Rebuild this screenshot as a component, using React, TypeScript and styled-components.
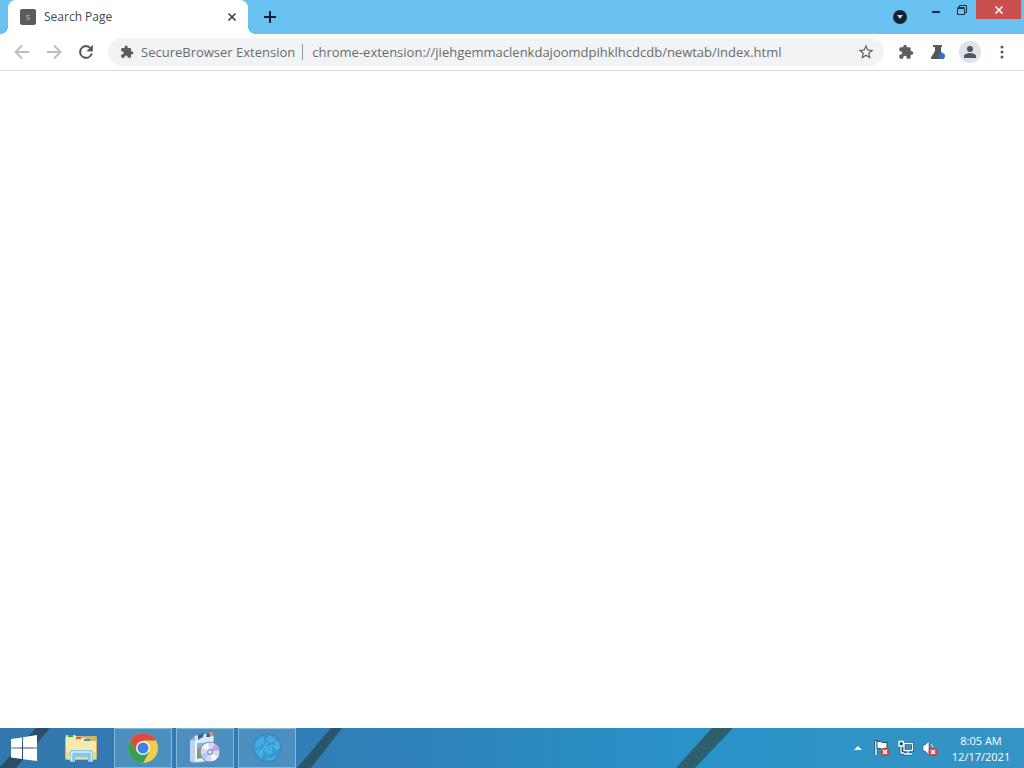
import React from 'react';
import styled, { createGlobalStyle } from 'styled-components';

const GlobalStyle = createGlobalStyle`
  * { box-sizing: border-box; }
  body {
    margin: 0;
    background: #fff;
    font-family: "Open Sans", "Noto Sans", sans-serif;
  }
  button, input { font: inherit; color: inherit; }
`;

const Desktop = styled.div`
  display: flex;
  flex-direction: column;
  min-height: 100vh;
`;

const PlainButton = styled.button`
  display: flex;
  align-items: center;
  justify-content: center;
  padding: 0;
  border: 0;
  background: transparent;
`;

const TabStrip = styled.header`
  display: flex;
  height: 34px;
  padding: 0 3px 0 8px;
  background: #69c1f0;
`;

const Tab = styled.div`
  position: relative;
  display: flex;
  align-items: center;
  gap: 8px;
  width: 240px;
  padding: 0 8px 0 12px;
  border-radius: 8px 8px 0 0;
  background: #fff;
  color: #45494d;
  font-size: 12px;
  line-height: 16px;

  &::before, &::after {
    content: "";
    position: absolute;
    bottom: 0;
    width: 8px;
    height: 8px;
  }
  &::before {
    right: 100%;
    background: radial-gradient(circle at 0 0, transparent 8px, #fff 8px);
  }
  &::after {
    left: 100%;
    background: radial-gradient(circle at 100% 0, transparent 8px, #fff 8px);
  }
`;

const Favicon = styled.span`
  width: 16px;
  height: 16px;
  border-radius: 2px;
  background: #5b5b5b;
  color: #ccc;
  font-size: 8px;
  line-height: 16px;
  text-align: center;
`;

const TabTitle = styled.span`
  flex: 1;
`;

const TabClose = styled(PlainButton)`
  width: 16px;
  height: 16px;
`;

const NewTab = styled(PlainButton)`
  width: 28px;
  margin-left: 8px;
`;

const WindowControls = styled.div`
  display: flex;
  align-items: flex-start;
  margin-left: auto;
`;

const TabSearch = styled(PlainButton)`
  width: 28px;
  height: 34px;
  margin-right: 10px;
`;

const WindowButton = styled(PlainButton)<{ $close?: boolean }>`
  width: ${p => (p.$close ? 45 : 26)}px;
  height: 19px;
  background: ${p => (p.$close ? '#c9504f' : 'transparent')};
`;

const Toolbar = styled.nav`
  display: flex;
  align-items: center;
  gap: 4px;
  height: 37px;
  padding: 0 8px;
  border-bottom: 1px solid #d9dbde;
  background: #fff;
`;

const ToolButton = styled(PlainButton)`
  width: 28px;
  height: 28px;
`;

const Omnibox = styled.div`
  display: flex;
  flex: 1;
  align-items: center;
  height: 28px;
  margin: 0 4px;
  padding: 0 4px 0 12px;
  border-radius: 14px;
  background: #f1f3f4;
  color: #686c70;
  font-size: 13px;
  line-height: 18px;
`;

const SiteChip = styled.label`
  display: flex;
  align-items: center;
  gap: 7px;
  white-space: nowrap;
`;

const Divider = styled.span`
  width: 1px;
  height: 16px;
  background: #96999c;
`;

const Address = styled.input`
  flex: 1;
  min-width: 0;
  padding: 0 0 0 9px;
  border: 0;
  outline: 0;
  background: transparent;
`;

const Avatar = styled.span`
  display: flex;
  align-items: center;
  justify-content: center;
  width: 22px;
  height: 22px;
  border-radius: 50%;
  background: #dfe2e7;
`;

const Page = styled.main`
  flex: 1;
  background: #fff;
`;

const Taskbar = styled.footer`
  position: relative;
  display: flex;
  height: 40px;
  background: linear-gradient(90deg, #3277ae 0%, #2f80b7 35%, #2993c8 68%, #3594c3 100%);
`;

const Streaks = styled.svg`
  position: absolute;
  inset: 0;
  width: 100%;
  height: 100%;
`;

const Apps = styled.div`
  position: relative;
  display: flex;
  gap: 4px;
`;

const Start = styled(PlainButton)`
  width: 48px;
`;

const AppButton = styled(PlainButton)<{ $open?: boolean }>`
  width: 58px;
  border: 1px solid ${p => (p.$open ? '#86b7d7' : 'transparent')};
  background: ${p => (p.$open ? '#4c8fbf' : 'transparent')};
`;

const Tray = styled.div`
  position: relative;
  display: flex;
  align-items: center;
  margin-left: auto;
  padding-right: 8px;
`;

const TrayButton = styled(PlainButton)`
  width: 24px;
  height: 40px;
`;

const Clock = styled.time`
  width: 70px;
  margin-left: 4px;
  padding-top: 2px;
  color: #fff;
  font-size: 11px;
  line-height: 16px;
  text-align: center;
`;

const puzzlePath =
  'M20.500 11H19V7c0-1.100-.9-2-2-2h-4V3.500a2.500 2.500 0 0 0-5 0V5H4c-1.100 0-2 .9-2 2v3.800h1.500a2.700 2.700 0 0 1 0 5.400H2V20c0 1.100.9 2 2 2h3.800v-1.500a2.700 2.700 0 0 1 5.400 0V22H17c1.100 0 2-.9 2-2v-4h1.500a2.500 2.500 0 0 0 0-5z';

const Puzzle = ({ size }: { size: number }) => (
  <svg width={size} height={size} viewBox="0 0 24 24" fill="#5b5f64" aria-hidden="true">
    <path d={puzzlePath} />
  </svg>
);

const ErrorBadge = ({ x, y }: { x: number; y: number }) => (
  <g>
    <circle cx={x} cy={y} r="4" fill="#d84b42" stroke="#c23a35" />
    <path d={`M${x - 2} ${y - 2}l4 4m0-4l-4 4`} stroke="#fff" strokeWidth="1.500" />
  </g>
);

function BrowserTabs() {
  return (
    <TabStrip>
      <Tab>
        <Favicon>S</Favicon>
        <TabTitle>Search Page</TabTitle>
        <TabClose aria-label="Close tab">
          <svg width="16" height="16" stroke="#3c4043" strokeWidth="1.700">
            <path d="M4.500 4.500l7 7m0-7l-7 7" />
          </svg>
        </TabClose>
      </Tab>
      <NewTab aria-label="New tab">
        <svg width="14" height="14" stroke="#10222e" strokeWidth="2">
          <path d="M1 7h12M7 1v12" />
        </svg>
      </NewTab>
      <WindowControls>
        <TabSearch aria-label="Search tabs">
          <svg width="14" height="14">
            <circle cx="7" cy="7" r="7" fill="#14222d" />
            <path d="M4 5h6L7 9z" fill="#b9d9ea" />
          </svg>
        </TabSearch>
        <WindowButton aria-label="Minimize">
          <svg width="12" height="14">
            <path d="M1 8h8v2H1z" fill="#123047" />
          </svg>
        </WindowButton>
        <WindowButton aria-label="Restore">
          <svg width="12" height="12" fill="none" stroke="#123047">
            <path d="M.5 4.500h7v6h-7zM.5 3.500h7M2.500 3V1.500h7v7H8" />
          </svg>
        </WindowButton>
        <WindowButton $close aria-label="Close">
          <svg width="10" height="10" stroke="#fff" strokeWidth="1.600">
            <path d="M1.500 1.500l7 7m0-7l-7 7" />
          </svg>
        </WindowButton>
      </WindowControls>
    </TabStrip>
  );
}

function BrowserToolbar() {
  return (
    <Toolbar>
      <ToolButton aria-label="Back">
        <svg width="16" height="16" fill="none" stroke="#b9bbbe" strokeWidth="1.800">
          <path d="M15 8H2M8 1.500L1.500 8 8 14.500" />
        </svg>
      </ToolButton>
      <ToolButton aria-label="Forward">
        <svg width="16" height="16" fill="none" stroke="#b9bbbe" strokeWidth="1.800">
          <path d="M1 8h13M8 1.500L14.500 8 8 14.500" />
        </svg>
      </ToolButton>
      <ToolButton aria-label="Reload">
        <svg width="20" height="20" viewBox="0 0 24 24" fill="#505459" stroke="#505459" strokeWidth=".5">
          <path d="M17.650 6.350A8 8 0 1 0 19.730 14h-2.080A6 6 0 1 1 12 6c1.660 0 3.140.69 4.220 1.780L13 11h7V4z" />
        </svg>
      </ToolButton>
      <Omnibox>
        <SiteChip htmlFor="address">
          <Puzzle size={14} />
          SecureBrowser Extension
          <Divider />
        </SiteChip>
        <Address
          id="address"
          spellCheck={false}
          defaultValue="chrome-extension://jiehgemmaclenkdajoomdpihklhcdcdb/newtab/index.html"
        />
        <ToolButton aria-label="Bookmark this page">
          <svg width="18" height="18" viewBox="0 0 24 24" fill="#5b5f64">
            <path d="M22 9.240l-7.190-.62L12 2 9.190 8.630 2 9.240l5.460 4.730L5.820 21 12 17.270 18.180 21l-1.630-7.030zM12 15.400l-3.760 2.270 1-4.280-3.320-2.880 4.380-.38L12 6.100l1.710 4.040 4.380.38-3.320 2.880 1 4.280z" />
          </svg>
        </ToolButton>
      </Omnibox>
      <ToolButton aria-label="Extensions">
        <Puzzle size={16} />
      </ToolButton>
      <ToolButton aria-label="Experiments">
        <svg width="16" height="16">
          <path d="M3 1h9v2h-1v4l3 6.500q.5 1.500-1 1.500H2q-1.500 0-1-1.500L5 7V3H3z" fill="#55595e" />
          <circle cx="12" cy="12" r="3" fill="#2f72de" />
        </svg>
      </ToolButton>
      <ToolButton aria-label="Profile">
        <Avatar>
          <svg width="14" height="14" fill="#50565f">
            <circle cx="7" cy="4" r="3" />
            <path d="M1 13v-2c0-2 4-3 6-3s6 1 6 3v2z" />
          </svg>
        </Avatar>
      </ToolButton>
      <ToolButton aria-label="Menu">
        <svg width="4" height="14" fill="#55595e">
          <circle cx="2" cy="2" r="1.500" />
          <circle cx="2" cy="7" r="1.500" />
          <circle cx="2" cy="12" r="1.500" />
        </svg>
      </ToolButton>
    </Toolbar>
  );
}

function SystemTaskbar() {
  return (
    <Taskbar>
      <Streaks viewBox="0 0 1024 40" preserveAspectRatio="none" aria-hidden="true">
        <path d="M0 39L36 0h14L16 40H0z" fill="#2a4e66" />
        <path d="M297 40L331 0h11L311 40z" fill="#2b5568" />
        <path d="M676 40L712 0h21L695 40z" fill="#2f5e6d" />
      </Streaks>
      <Apps>
        <Start aria-label="Start">
          <svg width="28" height="28" fill="#fff">
            <path d="M1 5L12 3.500v10H1zM13 3.300L27 1v12.500H13zM1 14.500h11V25L1 23.500zM13 14.500h14V27l-14-1.800z" />
          </svg>
        </Start>
        <AppButton aria-label="File Explorer">
          <svg width="34" height="32">
            <path d="M1 6q0-2 2-2h28q2 0 2 2v20q0 2-2 2H3q-2 0-2-2z" fill="#d3b565" />
            <path d="M2 4q0-1 1-1h8l3 3h8l2 3h8v5H2z" fill="#f6e7ae" />
            <path d="M4 3h5v2H4z" fill="#2da545" />
            <path d="M12 5h5v2h-5z" fill="#d6623c" />
            <path d="M20 7h6v2h-6z" fill="#3f93d2" />
            <path d="M2 11h14l2-2h14v17q0 1-1 1H3q-1 0-1-1z" fill="#f8e9a9" />
            <path d="M2 20h30v6q0 1-1 1H3q-1 0-1-1z" fill="#f1d984" />
            <path d="M6 30V21q0-3 3-3h17q3 0 3 3v9h-5v-5H11v5z" fill="#83c6e8" />
            <path d="M7.500 29v-7q0-2 2-2h16q2 0 2 2v7" fill="none" stroke="#d6f1fb" strokeWidth="1.500" />
          </svg>
        </AppButton>
        <AppButton $open aria-label="Google Chrome">
          <svg width="32" height="32" viewBox="0 0 32 32">
            <circle cx="16" cy="16" r="15" fill="#f5ce48" />
            <path d="M16 16L3 8.500A15 15 0 0 1 29 8.500H16z" fill="#dd4b3e" />
            <path d="M3 8.500L9.500 19.750 16 16V8.500z" fill="#dd4b3e" />
            <path d="M3 8.500A15 15 0 0 0 16 31l6.500-11.250H9.500z" fill="#33a058" />
            <circle cx="16" cy="16" r="7" fill="#f3f6fa" />
            <circle cx="16" cy="16" r="5.500" fill="#3f80e4" />
          </svg>
        </AppButton>
        <AppButton $open aria-label="Program installer">
          <svg width="34" height="34">
            <path d="M2 9l6-5 16-2 2 3v24l-3 2-19 1-2-2z" fill="#8db4dd" />
            <path d="M2 10l5-1v22l-5-1z" fill="#bcd5ef" />
            <path d="M7 9l18-1v21L7 31z" fill="#f2f6fc" />
            <path d="M7 5l16-3 3 5-4 3-15 1z" fill="#dce8f6" />
            <path d="M10 4l6-2-1 4-5 3zM19 2l5 1-2 3h-4z" fill="#3f5e9c" />
            <path d="M22 1h3v4h-3z" fill="#e38b74" />
            <path d="M9 12l12-1v9l-12 1z" fill="#7eb9ee" />
            <path d="M9 20q4-5 10-3v9l-10 2z" fill="#4eb55a" />
            <path d="M9 17q3 0 5 4l-5 2z" fill="#e8734a" />
            <circle cx="22" cy="21" r="10" fill="#d5d8f0" stroke="#7a84b4" />
            <path d="M22 21l-8-5a9 9 0 0 1 6-4zM22 21l8 5a9 9 0 0 1-6 4z" fill="#f7f8ff" />
            <path d="M22 21l5-8a9 9 0 0 1 4 6z" fill="#b8a8e5" />
            <path d="M22 21l-5 8a9 9 0 0 1-4-6z" fill="#b5c9f2" />
            <circle cx="22" cy="21" r="3" fill="#8f9bc8" />
            <circle cx="22" cy="21" r="1.500" fill="#fff" />
          </svg>
        </AppButton>
        <AppButton $open aria-label="Web application">
          <svg width="32" height="32">
            <circle cx="16" cy="16" r="14" fill="#3499d0" stroke="#3a86b8" />
            <path
              d="M5 9l7-5 2 5-4 5-6 2zM17 3l7 3-3 5-5-2zM23 11l5-2 1 7-4 3zM4 18l6-1 3 5-3 5zM15 14l6 1 1 6-5 2-4-4zM15 25l5 1 5-4-2 5-6 2z"
              fill="#43ace0"
            />
            <path d="M22 8l5 3M19 13l8 3M9 22l8-12" stroke="#67bce6" fill="none" />
          </svg>
        </AppButton>
      </Apps>
      <Tray>
        <TrayButton aria-label="Show hidden icons">
          <svg width="8" height="4">
            <path d="M0 4l4-4 4 4z" fill="#fff" />
          </svg>
        </TrayButton>
        <TrayButton aria-label="Action center">
          <svg width="16" height="16">
            <path d="M2 0v15" stroke="#24506e" strokeWidth="3" />
            <path d="M2 1v14" stroke="#fff" strokeWidth="1.500" />
            <path d="M3 1.500h4l1 1h5v7H8l-1-1H3z" fill="#fff" stroke="#24506e" />
            <ErrorBadge x={11} y={12} />
          </svg>
        </TrayButton>
        <TrayButton aria-label="Network">
          <svg width="16" height="16" fill="none">
            <path d="M6 3.500h8.500v7H6zM10 11v3M6 14h8M3 6v7h3" stroke="#24506e" strokeWidth="3" />
            <path d="M6 3.500h8.500v7H6zM10 11v3M6 14h8M3 6v7h3" stroke="#fff" strokeWidth="1.300" />
            <path d="M1 1.500h4.500V6H1z" fill="#24506e" stroke="#fff" strokeWidth="1.300" />
          </svg>
        </TrayButton>
        <TrayButton aria-label="Volume">
          <svg width="16" height="16">
            <path d="M1 5h2l4-4v14l-4-4H1z" fill="#fff" stroke="#24506e" strokeWidth=".6" />
            <path d="M9 4q2 2 2 4" fill="none" stroke="#d6e9f3" />
            <ErrorBadge x={11} y={12} />
          </svg>
        </TrayButton>
        <Clock dateTime="2021-12-17T08:05">
          8:05 AM
          <br />
          12/17/2021
        </Clock>
      </Tray>
    </Taskbar>
  );
}

export default function App() {
  return (
    <Desktop>
      <GlobalStyle />
      <BrowserTabs />
      <BrowserToolbar />
      <Page />
      <SystemTaskbar />
    </Desktop>
  );
}
